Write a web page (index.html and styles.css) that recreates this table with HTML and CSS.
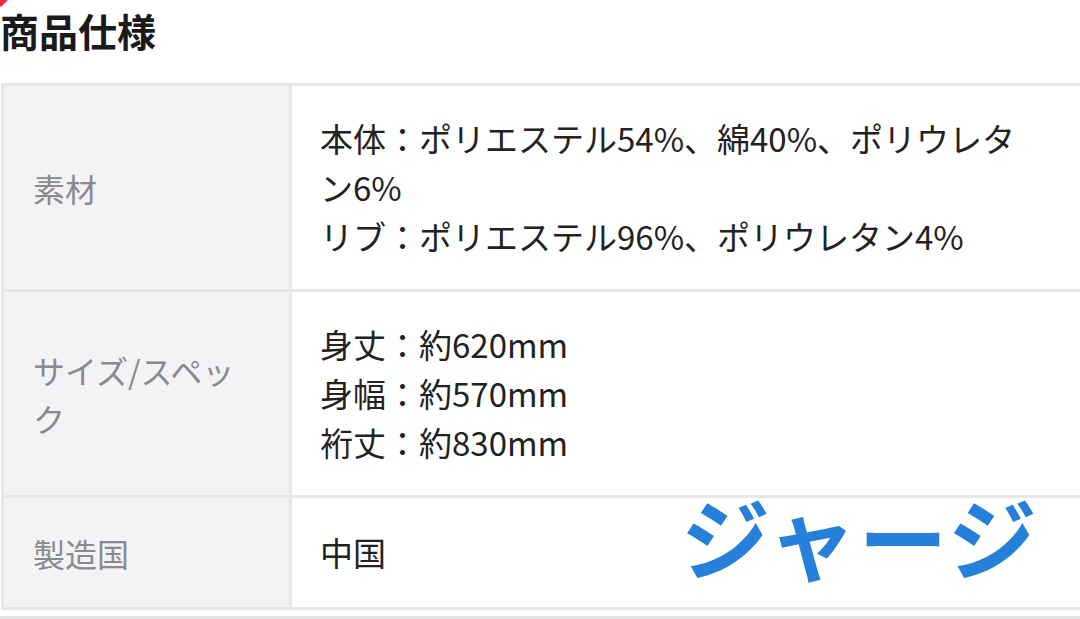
FILE: index.html
```html
<!DOCTYPE html>
<html lang="ja">
<head>
<meta charset="utf-8">
<link rel="stylesheet" href="styles.css">
</head>
<body>
<div class="page">
  <span class="corner"></span>
  <h1 class="title">商品仕様</h1>
  <div class="spec">
    <div class="label">素材</div>
    <div class="value">本体：ポリエステル54%、綿40%、ポリウレタン6%<br>リブ：ポリエステル96%、ポリウレタン4%</div>
    <div class="label">サイズ/スペック</div>
    <div class="value">身丈：約620mm<br>身幅：約570mm<br>裄丈：約830mm</div>
    <div class="label">製造国</div>
    <div class="value short">中国</div>
    <div class="stamp">ジャージ</div>
  </div>
  <div class="foot"></div>
</div>
</body>
</html>
```

FILE: styles.css
```css
html, body {
  margin: 0;
  padding: 0;
  background: #ffffff;
}
body {
  font-family: "Noto Sans CJK JP", "Noto Sans", sans-serif;
  width: 1080px;
  height: 619px;
  overflow: hidden;
}
.page {
  position: relative;
  height: 619px;
}
.corner {
  position: absolute;
  left: -6px;
  top: -10px;
  width: 14px;
  height: 14px;
  background: #f0284a;
  transform: rotate(45deg);
}
.title {
  margin: 0;
  padding: 4px 0 0 0;
  height: 78px;
  box-sizing: border-box;
  font-size: 39px;
  line-height: 52px;
  font-weight: 700;
  color: #1a1a1a;
}
.spec {
  position: relative;
  margin-left: 1px;
  margin-top: 5px;
  display: grid;
  grid-template-columns: 285px 1fr;
  gap: 3px;
  padding: 3px 0 3px 3px;
  background: #e7e7e9;
  width: 1076px;
}
.label {
  background: #f3f3f5;
  color: #8a8a8e;
  font-size: 32px;
  line-height: 48px;
  padding: 0 34px 0 29px;
  display: flex;
  align-items: center;
}
.value {
  background: #ffffff;
  color: #222222;
  font-size: 33px;
  line-height: 49px;
  padding: 28px 45px 28px 28px;
}
.value.short {
  padding-top: 30px;
  padding-bottom: 30px;
}
.stamp {
  position: absolute;
  left: 680px;
  top: 392px;
  font-size: 89px;
  line-height: 120px;
  font-weight: 700;
  color: #2680d9;
  letter-spacing: 2px;
}
.foot {
  position: absolute;
  left: 0;
  right: 0;
  bottom: 0;
  height: 3px;
  background: #e4e4e6;
}
```
